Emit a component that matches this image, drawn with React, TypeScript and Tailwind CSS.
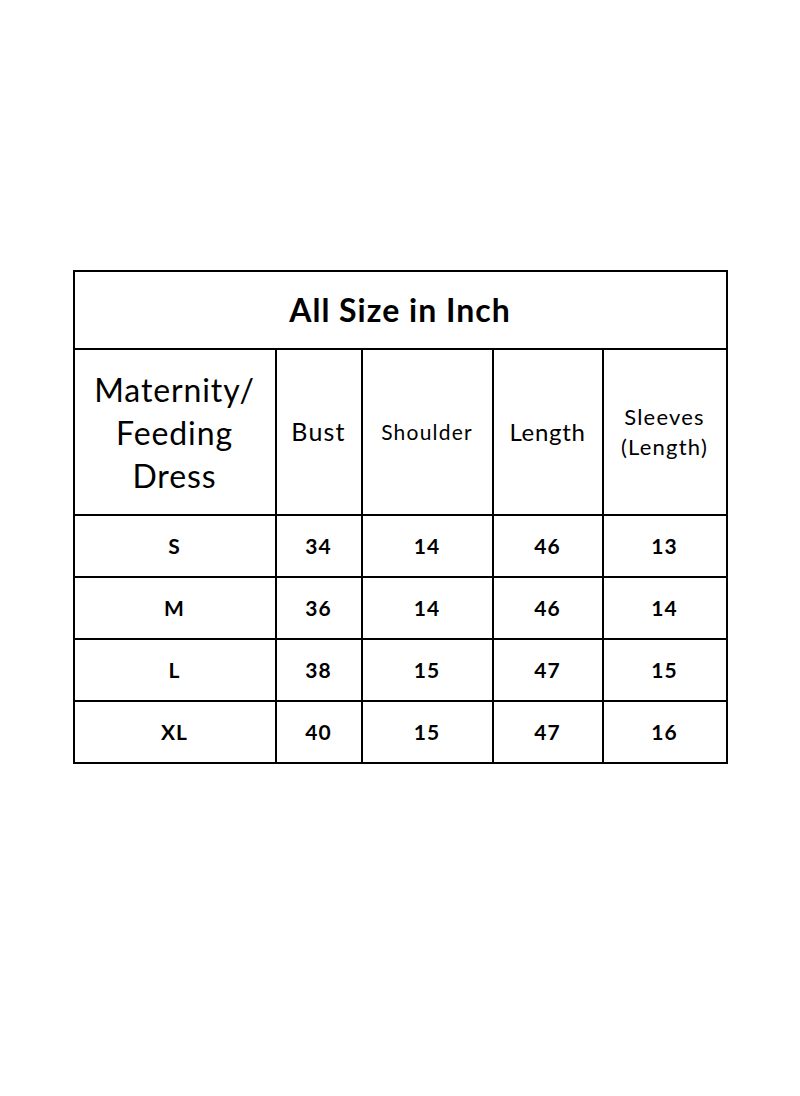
import React from 'react';

const rows = [
  ['S', '34', '14', '46', '13'],
  ['M', '36', '14', '46', '14'],
  ['L', '38', '15', '47', '15'],
  ['XL', '40', '15', '47', '16'],
];

export default function App() {
  return (
    <div className="min-h-[1096px] w-[800px] bg-white pt-[270px] text-black" style={{ fontFamily: 'Lato, "Noto Sans", sans-serif' }}>
      <div className="mx-auto w-[655px] border-2 border-black bg-black">
        {/* Title */}
        <div className="flex h-[76px] items-center justify-center bg-white text-[32px] font-bold tracking-[1px]">
          All Size in Inch
        </div>

        <div className="mt-[2px] grid grid-cols-[200px_84px_129px_108px_122px] gap-[2px]">
          {/* Header */}
          <div className="flex h-[164px] items-center justify-center bg-white text-center text-[32px] leading-[43px] tracking-[0.9px]">
            Maternity/
            <br />
            Feeding
            <br />
            Dress
          </div>
          <div className="flex items-center justify-center bg-white text-[25px] tracking-[1.2px]">Bust</div>
          <div className="flex items-center justify-center bg-white text-[21px] tracking-[1.2px]">Shoulder</div>
          <div className="flex items-center justify-center bg-white text-[24px] tracking-[0.7px]">Length</div>
          <div className="flex items-center justify-center bg-white text-center text-[22px] leading-[30px] tracking-[1.2px]">
            Sleeves
            <br />
            (Length)
          </div>

          {/* Data */}
          {rows.map((r) =>
            r.map((v, i) => (
              <div key={r[0] + i} className="flex h-[60px] items-center justify-center bg-white text-[21px] font-bold tracking-[1px]">
                {v}
              </div>
            ))
          )}
        </div>
      </div>
    </div>
  );
}
